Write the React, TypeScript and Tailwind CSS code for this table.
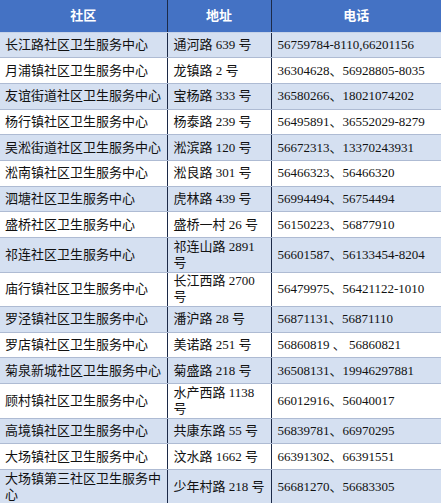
const rows: [string, string, string, boolean][] = [
  ["长江路社区卫生服务中心", "通河路 639 号", "56759784-8110,66201156", false],
  ["月浦镇社区卫生服务中心", "龙镇路 2 号", "36304628、56928805-8035", false],
  ["友谊街道社区卫生服务中心", "宝杨路 333 号", "36580266、18021074202", false],
  ["杨行镇社区卫生服务中心", "杨泰路 239 号", "56495891、36552029-8279", false],
  ["吴淞街道社区卫生服务中心", "淞滨路 120 号", "56672313、13370243931", false],
  ["淞南镇社区卫生服务中心", "淞良路 301 号", "56466323、56466320", false],
  ["泗塘社区卫生服务中心", "虎林路 439 号", "56994494、56754494", false],
  ["盛桥社区卫生服务中心", "盛桥一村 26 号", "56150223、56877910", false],
  ["祁连社区卫生服务中心", "祁连山路 2891 号", "56601587、56133454-8204", true],
  ["庙行镇社区卫生服务中心", "长江西路 2700 号", "56479975、56421122-1010", true],
  ["罗泾镇社区卫生服务中心", "潘沪路 28 号", "56871131、56871110", false],
  ["罗店镇社区卫生服务中心", "美诺路 251 号", "56860819 、 56860821", false],
  ["菊泉新城社区卫生服务中心", "菊盛路 218 号", "36508131、19946297881", false],
  ["顾村镇社区卫生服务中心", "水产西路 1138 号", "66012916、56040017", true],
  ["高境镇社区卫生服务中心", "共康东路 55 号", "56839781、66970295", false],
  ["大场镇社区卫生服务中心", "汶水路 1662 号", "66391302、66391551", false],
  ["大场镇第三社区卫生服务中心", "少年村路 218 号", "56681270、56683305", true],
];

export default function App() {
  return (
    <div
      className="w-[441px] h-[503px] overflow-hidden bg-white text-[13px] leading-[16px] text-[#111]"
      style={{ fontFamily: '"Liberation Serif", "Noto Sans CJK SC", serif' }}
    >
      <table className="w-[441px] table-fixed border-collapse">
        <colgroup>
          <col className="w-[167px]" />
          <col className="w-[104px]" />
          <col className="w-[170px]" />
        </colgroup>
        <thead>
          <tr className="h-[32px] bg-[#4472c4] text-white font-bold">
            <th className="border-r border-b border-r-[#1c2a48] border-b-[#c5d2e8] text-center align-middle">
              社区
            </th>
            <th className="border-r border-b border-r-[#1c2a48] border-b-[#c5d2e8] text-center align-middle">
              地址
            </th>
            <th className="border-b border-b-[#c5d2e8] text-center align-middle">电话</th>
          </tr>
        </thead>
        <tbody>
          {rows.map(([name, addr, phone, tall], i) => (
            <tr
              key={name}
              className={`${tall ? "h-[34.5px]" : "h-[25.7px]"} ${
                i % 2 === 0 ? "bg-[#d5e0f1]" : "bg-white"
              }`}
            >
              <td className="border-r border-b border-r-[#1c2a48] border-b-[#aebbd3] pl-[5px] pr-[4px] py-0 align-middle">
                {name}
              </td>
              <td className="border-r border-b border-r-[#1c2a48] border-b-[#aebbd3] pl-[6px] pr-[3px] py-0 align-middle">
                {addr}
              </td>
              <td className="border-b border-b-[#aebbd3] pl-[6px] pr-[2px] py-0 align-middle whitespace-nowrap">
                {phone}
              </td>
            </tr>
          ))}
        </tbody>
      </table>
    </div>
  );
}
